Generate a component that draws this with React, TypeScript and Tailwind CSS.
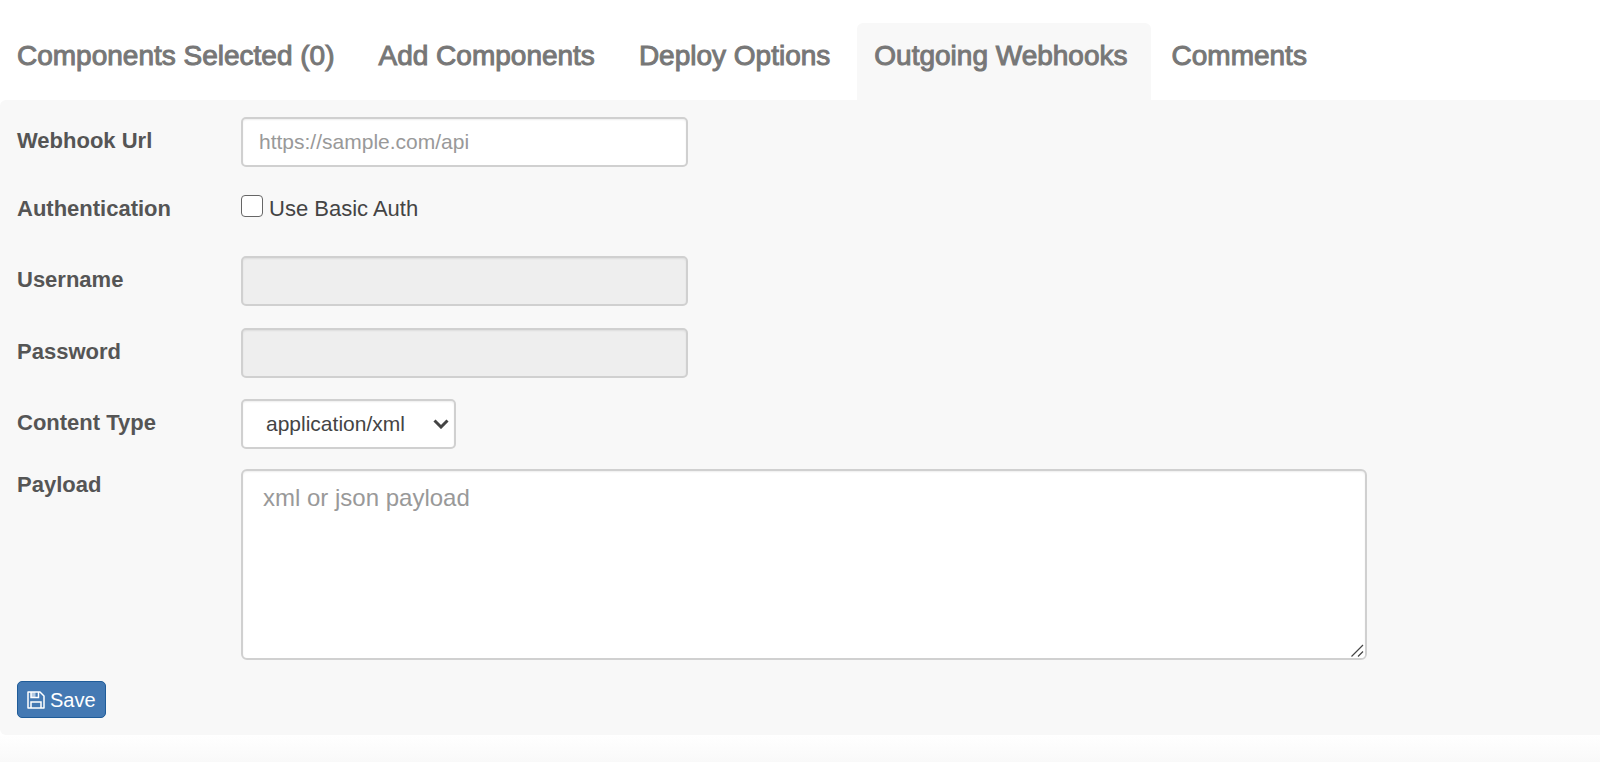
import { useState } from 'react'
import type { ReactNode } from 'react'

const TABS = ['Components Selected (0)', 'Add Components', 'Deploy Options', 'Outgoing Webhooks', 'Comments']

const controlClass =
    'h-[50px] rounded-[5px] border-2 border-[#d0d0d0] bg-white text-[21px] text-[#444] shadow-[inset_0_1px_2px_rgba(0,0,0,0.07)] placeholder:text-[#999] disabled:bg-[#eee]'

interface FormRowProps {
    label: string
    htmlFor: string
    className?: string
    labelClassName?: string
    children: ReactNode
}

function FormRow({ label, htmlFor, className = '', labelClassName = 'pt-2.5', children }: FormRowProps) {
    return (
        <div className={`flex items-start ${className}`}>
            <label
                htmlFor={htmlFor}
                className={`w-56 shrink-0 text-[22px] leading-7 font-bold text-[#555] ${labelClassName}`}
            >
                {label}
            </label>
            {children}
        </div>
    )
}

function FloppyIcon() {
    return (
        <svg viewBox="0 0 18 18" className="h-[18px] w-[18px]" fill="none" stroke="currentColor" strokeWidth="1.5" aria-hidden="true">
            <path d="M1 1h12l4 4v12H1z" strokeLinejoin="round" />
            <path d="M4 1v5.500h7.500V1" />
            <path d="M4 1h4.500v5.500H4z" fill="currentColor" fillOpacity="0.600" stroke="none" />
            <path d="M4 17v-6h10v6" />
        </svg>
    )
}

export default function App() {
    const [activeTab, setActiveTab] = useState('Outgoing Webhooks')
    const [useBasicAuth, setUseBasicAuth] = useState(false)

    return (
        <div className="flex min-h-screen flex-col bg-white pt-[23px] font-['Liberation_Sans',Arial,sans-serif]">
            <div role="tablist" className="flex gap-1">
                {TABS.map(tab => (
                    <button
                        key={tab}
                        type="button"
                        role="tab"
                        aria-selected={activeTab === tab}
                        onClick={() => setActiveTab(tab)}
                        className={`h-[77px] rounded-t-md pr-[23px] pb-3 pl-[17px] text-[28px] leading-8 font-medium whitespace-nowrap text-[#777] [-webkit-text-stroke:1px_#777] ${
                            activeTab === tab ? 'bg-[#f8f8f8]' : ''
                        }`}
                    >
                        {tab}
                    </button>
                ))}
            </div>

            <form className="rounded-l-md bg-[#f8f8f8] px-[17px] pt-[17px] pb-[17px]" onSubmit={e => e.preventDefault()}>
                <FormRow label="Webhook Url" htmlFor="webhook-url">
                    <input id="webhook-url" type="text" placeholder="https://sample.com/api" className={`w-[447px] px-4 ${controlClass}`} />
                </FormRow>

                <FormRow label="Authentication" htmlFor="basic-auth" className="mt-[18px] h-[50px]">
                    <label className="flex items-start pt-2.5 text-[22px] leading-7 text-[#444]">
                        <input
                            id="basic-auth"
                            type="checkbox"
                            checked={useBasicAuth}
                            onChange={e => setUseBasicAuth(e.target.checked)}
                            className={`mr-1.5 h-[22px] w-[22px] appearance-none rounded-[4px] border border-[#666] ${
                                useBasicAuth ? 'bg-[#337ab7]' : 'bg-white'
                            }`}
                        />
                        Use Basic Auth
                    </label>
                </FormRow>

                <FormRow label="Username" htmlFor="username" className="mt-[21px]">
                    <input id="username" type="text" disabled={!useBasicAuth} className={`w-[447px] px-4 ${controlClass}`} />
                </FormRow>

                <FormRow label="Password" htmlFor="password" className="mt-[22px]">
                    <input id="password" type="password" disabled={!useBasicAuth} className={`w-[447px] px-4 ${controlClass}`} />
                </FormRow>

                <FormRow label="Content Type" htmlFor="content-type" className="mt-[21px]">
                    <div className="relative">
                        <select id="content-type" className={`block w-[215px] appearance-none pr-8 pl-[23px] ${controlClass}`}>
                            <option>application/xml</option>
                            <option>application/json</option>
                        </select>
                        <svg
                            viewBox="0 0 16 10"
                            className="pointer-events-none absolute top-5 right-[7px] h-2.5 w-4"
                            fill="none"
                            stroke="#444"
                            strokeWidth="3"
                            aria-hidden="true"
                        >
                            <path d="M1.500 1.500 8 8l6.500-6.500" />
                        </svg>
                    </div>
                </FormRow>

                <FormRow label="Payload" htmlFor="payload" className="mt-5" labelClassName="pt-0.5">
                    <div className="relative max-w-[1126px] flex-1">
                        <textarea
                            id="payload"
                            placeholder="xml or json payload"
                            className="block h-[191px] w-full resize-y rounded-md border-2 border-[#d0d0d0] bg-white px-5 py-[11px] text-2xl text-[#444] shadow-[inset_0_1px_2px_rgba(0,0,0,0.07)] placeholder:text-[#999]"
                        />
                        {/* resize grip */}
                        <svg
                            viewBox="0 0 14 14"
                            className="pointer-events-none absolute right-0.5 bottom-0.5 h-3.5 w-3.5 rounded-br-sm bg-white"
                            fill="none"
                            stroke="#444"
                            strokeWidth="1.200"
                            aria-hidden="true"
                        >
                            <path d="M0.500 12.500 12 1M7 12.500 12 7.500" />
                        </svg>
                    </div>
                </FormRow>

                <button
                    type="submit"
                    className="mt-[21px] flex h-[37px] items-center gap-[5px] rounded-[5px] border border-[#1f5c99] bg-[#4479b3] px-[9px] text-xl text-white"
                >
                    <FloppyIcon />
                    Save
                </button>
            </form>

            <div className="flex-1 bg-linear-to-b from-white to-[#f9f9f9]" />
        </div>
    )
}
